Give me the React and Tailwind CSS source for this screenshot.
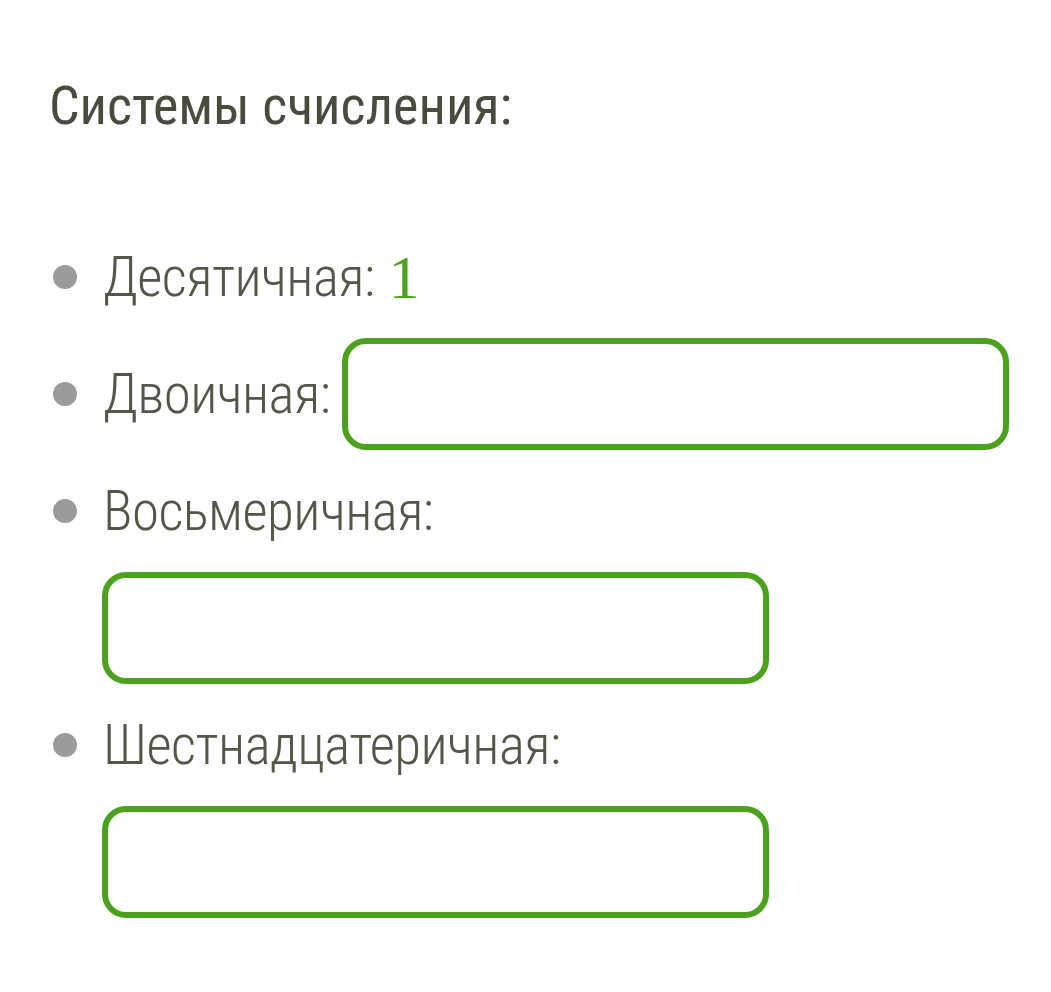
import React from "react";

const Bullet = () => (
  <span className="w-[24px] h-[24px] rounded-full bg-[#9b9b9b] shrink-0 ml-[53px] mr-[26px]" />
);

const Field = ({ className = "" }) => (
  <input
    type="text"
    className={`h-[112px] w-[667px] border-[6px] border-[#4ca11e] rounded-[24px] bg-white outline-none ${className}`}
  />
);

const App = () => {
  return (
    <div
      className="min-h-screen bg-white text-[#55554a]"
      style={{ fontFamily: "'Roboto Condensed', Roboto, 'Liberation Sans', sans-serif" }}
    >
      {/* Заголовок */}
      <h2 className="pt-[74px] pl-[49px] text-[54px] leading-[1.2] text-[#4a4a3e]">
        Системы счисления:
      </h2>

      <ul className="mt-[80px] text-[55px] font-light leading-[117px] tracking-[-0.01em]">
        <li className="flex items-center h-[117px]">
          <Bullet />
          <span>Десятичная:</span>
          <span
            className="ml-[14px] text-[#4ca11e] text-[62px]"
            style={{ fontFamily: "'Liberation Serif', serif" }}
          >
            1
          </span>
        </li>
        <li className="flex items-center h-[117px]">
          <Bullet />
          <span>Двоичная:</span>
          <Field className="ml-[12px]" />
        </li>
        <li className="flex items-center h-[117px]">
          <Bullet />
          <span>Восьмеричная:</span>
        </li>
        <li className="flex items-center h-[117px] pl-[102px]">
          <Field />
        </li>
        <li className="flex items-center h-[117px]">
          <Bullet />
          <span>Шестнадцатеричная:</span>
        </li>
        <li className="flex items-center h-[117px] pl-[102px]">
          <Field />
        </li>
      </ul>
    </div>
  );
};

export default App;
